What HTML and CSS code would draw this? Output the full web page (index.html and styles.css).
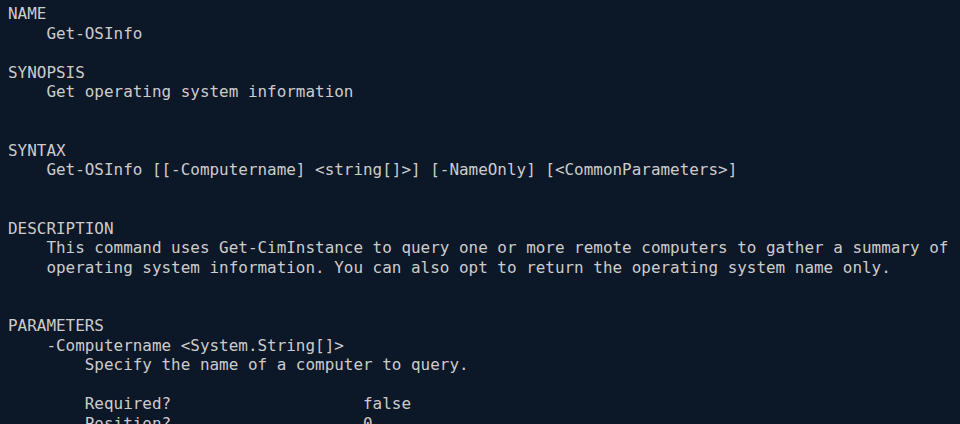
FILE: index.html
```html
<!DOCTYPE html>
<html lang="en">
<head>
<meta charset="utf-8">
<title>Get-Help Get-OSInfo</title>
<link rel="stylesheet" href="styles.css">
</head>
<body>
<main class="terminal">
<pre class="output">NAME
    Get-OSInfo

SYNOPSIS
    Get operating system information


SYNTAX
    Get-OSInfo [[-Computername] &lt;string[]&gt;] [-NameOnly] [&lt;CommonParameters&gt;]


DESCRIPTION
    This command uses Get-CimInstance to query one or more remote computers to gather a summary of
    operating system information. You can also opt to return the operating system name only.


PARAMETERS
    -Computername &lt;System.String[]&gt;
        Specify the name of a computer to query.

        Required?                    false
        Position?                    0</pre>
</main>
</body>
</html>
```

FILE: styles.css
```css
html, body {
  margin: 0;
  padding: 0;
  background: #0c1727;
  height: 100%;
  overflow: hidden;
}

.terminal {
  padding: 4px 8px 0 8px;
}

.output {
  margin: 0;
  font-family: "DejaVu Sans Mono", "Liberation Mono", monospace;
  font-size: 15.94px;
  line-height: 19.5px;
  color: #cccccc;
  white-space: pre;
}
```
